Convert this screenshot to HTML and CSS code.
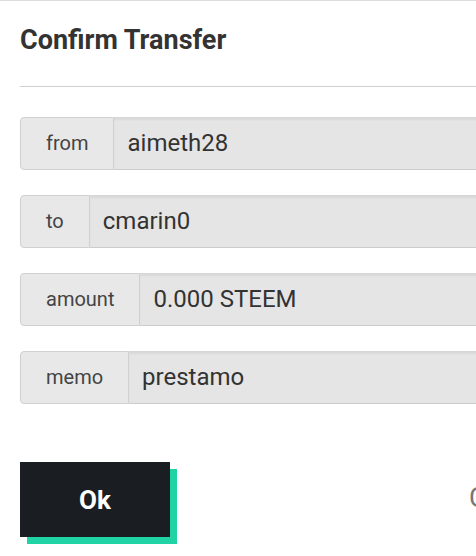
FILE: index.html
```html
<!DOCTYPE html>
<html>
<head>
<meta charset="utf-8">
<link rel="stylesheet" href="styles.css">
</head>
<body>
<div class="dialog">
  <h1 class="title">Confirm Transfer</h1>
  <div class="divider"></div>
  <div class="fields">
    <div class="group"><span class="label">from</span><span class="value">aimeth28</span></div>
    <div class="group"><span class="label">to</span><span class="value">cmarin0</span></div>
    <div class="group"><span class="label">amount</span><span class="value">0.000 STEEM</span></div>
    <div class="group"><span class="label">memo</span><span class="value">prestamo</span></div>
  </div>
  <div class="actions">
    <button class="ok">Ok</button>
    <span class="cancel">Cancel</span>
  </div>
</div>
</body>
</html>
```
FILE: styles.css
```css
html {
  overflow: hidden;
  background: #fff;
}
body {
  margin: 0;
  padding: 0 0 40px 0;
  font-family: Roboto, "Noto Sans", sans-serif;
  border-top: 1px solid #dcdcdc;
  width: 700px;
}
.dialog {
  padding-left: 20px;
}
.title {
  margin: 23px 0 0 0;
  font-size: 27px;
  line-height: 32px;
  font-weight: 700;
  color: #333;
  letter-spacing: 0;
}
.divider {
  margin-top: 30px;
  height: 1px;
  background: #cfcfcf;
}
.fields {
  margin-top: 30px;
  display: flex;
  flex-direction: column;
  gap: 25px;
}
.group {
  display: flex;
  height: 53px;
  box-sizing: border-box;
}
.label {
  display: flex;
  align-items: center;
  padding: 0 25px 2px 25px;
  background: #e8e8e8;
  border: 1px solid #d0d0d0;
  border-radius: 4px 0 0 4px;
  font-size: 20px;
  color: #444;
}
.value {
  flex: 1;
  display: flex;
  align-items: center;
  padding: 0 0 2px 13px;
  background: #e5e5e5;
  border-top: 1px solid #d6d6d6;
  border-bottom: 1px solid #cccccc;
  box-shadow: inset 0 2px 2px rgba(0,0,0,0.05);
  font-size: 24px;
  color: #333;
}
.actions {
  margin-top: 58px;
  display: flex;
  align-items: center;
}
.ok {
  width: 150px;
  height: 75px;
  border: none;
  border-radius: 0;
  background: #1a1e22;
  color: #fff;
  font-family: Roboto, "Noto Sans", sans-serif;
  font-size: 26px;
  font-weight: 700;
  box-shadow: 7px 7px 0 #1fd3a5;
  padding: 0;
}
.cancel {
  margin-left: 299px;
  margin-top: -4px;
  font-size: 27px;
  color: #777;
}
```
